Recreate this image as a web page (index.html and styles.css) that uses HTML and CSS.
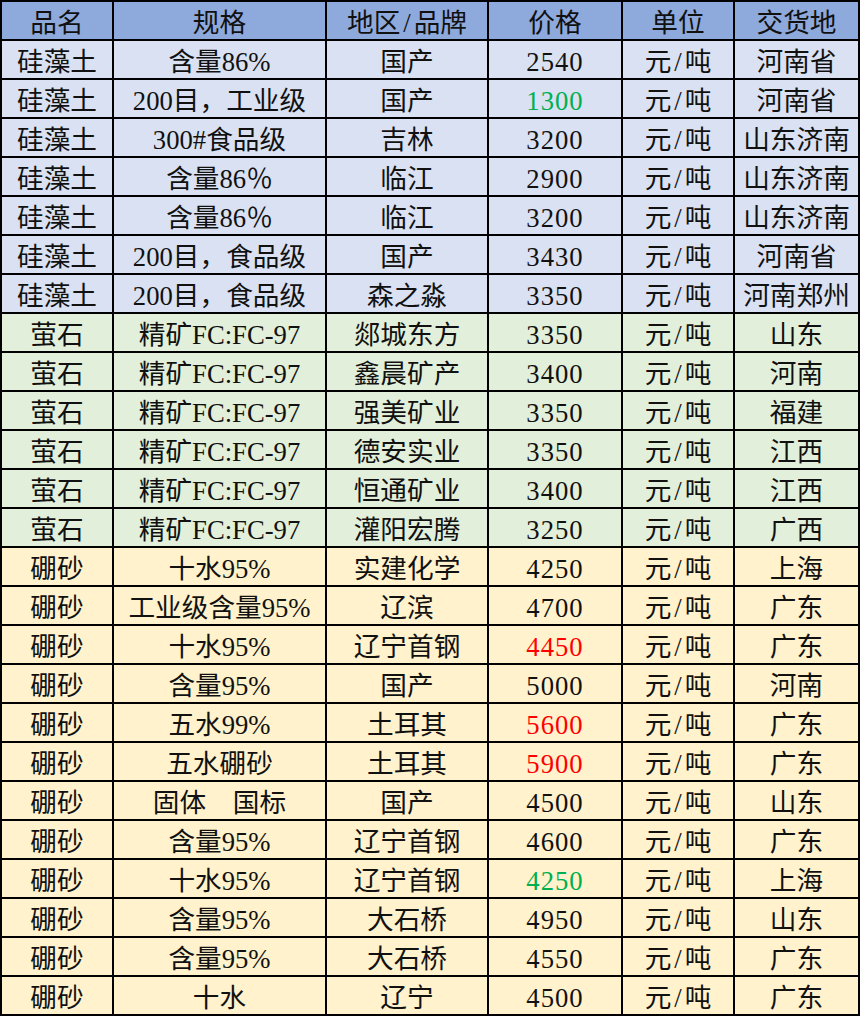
FILE: index.html
```html
<!DOCTYPE html>
<html lang="zh-CN">
<head>
<meta charset="utf-8">
<title>价格表</title>
<link rel="stylesheet" href="styles.css">
</head>
<body>
<table class="price-table">
  <colgroup>
    <col class="c-name">
    <col class="c-spec">
    <col class="c-brand">
    <col class="c-price">
    <col class="c-unit">
    <col class="c-place">
  </colgroup>
  <thead>
    <tr class="head"><th>品名</th><th>规格</th><th>地区<span class="sl">/</span>品牌</th><th>价格</th><th>单位</th><th>交货地</th></tr>
  </thead>
  <tbody>
    <tr class="blue"><td>硅藻土</td><td>含量86%</td><td>国产</td><td class="num">2540</td><td>元<span class="sl">/</span>吨</td><td>河南省</td></tr>
    <tr class="blue"><td>硅藻土</td><td>200目，工业级</td><td>国产</td><td class="num up">1300</td><td>元<span class="sl">/</span>吨</td><td>河南省</td></tr>
    <tr class="blue"><td>硅藻土</td><td>300#食品级</td><td>吉林</td><td class="num">3200</td><td>元<span class="sl">/</span>吨</td><td>山东济南</td></tr>
    <tr class="blue"><td>硅藻土</td><td>含量86％</td><td>临江</td><td class="num">2900</td><td>元<span class="sl">/</span>吨</td><td>山东济南</td></tr>
    <tr class="blue"><td>硅藻土</td><td>含量86％</td><td>临江</td><td class="num">3200</td><td>元<span class="sl">/</span>吨</td><td>山东济南</td></tr>
    <tr class="blue"><td>硅藻土</td><td>200目，食品级</td><td>国产</td><td class="num">3430</td><td>元<span class="sl">/</span>吨</td><td>河南省</td></tr>
    <tr class="blue"><td>硅藻土</td><td>200目，食品级</td><td>森之淼</td><td class="num">3350</td><td>元<span class="sl">/</span>吨</td><td>河南郑州</td></tr>
    <tr class="green"><td>萤石</td><td>精矿FC:FC-97</td><td>郯城东方</td><td class="num">3350</td><td>元<span class="sl">/</span>吨</td><td>山东</td></tr>
    <tr class="green"><td>萤石</td><td>精矿FC:FC-97</td><td>鑫晨矿产</td><td class="num">3400</td><td>元<span class="sl">/</span>吨</td><td>河南</td></tr>
    <tr class="green"><td>萤石</td><td>精矿FC:FC-97</td><td>强美矿业</td><td class="num">3350</td><td>元<span class="sl">/</span>吨</td><td>福建</td></tr>
    <tr class="green"><td>萤石</td><td>精矿FC:FC-97</td><td>德安实业</td><td class="num">3350</td><td>元<span class="sl">/</span>吨</td><td>江西</td></tr>
    <tr class="green"><td>萤石</td><td>精矿FC:FC-97</td><td>恒通矿业</td><td class="num">3400</td><td>元<span class="sl">/</span>吨</td><td>江西</td></tr>
    <tr class="green"><td>萤石</td><td>精矿FC:FC-97</td><td>灌阳宏腾</td><td class="num">3250</td><td>元<span class="sl">/</span>吨</td><td>广西</td></tr>
    <tr class="yellow"><td>硼砂</td><td>十水95%</td><td>实建化学</td><td class="num">4250</td><td>元<span class="sl">/</span>吨</td><td>上海</td></tr>
    <tr class="yellow"><td>硼砂</td><td>工业级含量95%</td><td>辽滨</td><td class="num">4700</td><td>元<span class="sl">/</span>吨</td><td>广东</td></tr>
    <tr class="yellow"><td>硼砂</td><td>十水95%</td><td>辽宁首钢</td><td class="num down">4450</td><td>元<span class="sl">/</span>吨</td><td>广东</td></tr>
    <tr class="yellow"><td>硼砂</td><td>含量95%</td><td>国产</td><td class="num">5000</td><td>元<span class="sl">/</span>吨</td><td>河南</td></tr>
    <tr class="yellow"><td>硼砂</td><td>五水99%</td><td>土耳其</td><td class="num down">5600</td><td>元<span class="sl">/</span>吨</td><td>广东</td></tr>
    <tr class="yellow"><td>硼砂</td><td>五水硼砂</td><td>土耳其</td><td class="num down">5900</td><td>元<span class="sl">/</span>吨</td><td>广东</td></tr>
    <tr class="yellow"><td>硼砂</td><td>固体　国标</td><td>国产</td><td class="num">4500</td><td>元<span class="sl">/</span>吨</td><td>山东</td></tr>
    <tr class="yellow"><td>硼砂</td><td>含量95%</td><td>辽宁首钢</td><td class="num">4600</td><td>元<span class="sl">/</span>吨</td><td>广东</td></tr>
    <tr class="yellow"><td>硼砂</td><td>十水95%</td><td>辽宁首钢</td><td class="num up">4250</td><td>元<span class="sl">/</span>吨</td><td>上海</td></tr>
    <tr class="yellow"><td>硼砂</td><td>含量95%</td><td>大石桥</td><td class="num">4950</td><td>元<span class="sl">/</span>吨</td><td>山东</td></tr>
    <tr class="yellow"><td>硼砂</td><td>含量95%</td><td>大石桥</td><td class="num">4550</td><td>元<span class="sl">/</span>吨</td><td>广东</td></tr>
    <tr class="yellow"><td>硼砂</td><td>十水</td><td>辽宁</td><td class="num">4500</td><td>元<span class="sl">/</span>吨</td><td>广东</td></tr>
  </tbody>
</table>
</body>
</html>
```

FILE: styles.css
```css
html, body {
  margin: 0;
  padding: 0;
  background: #ffffff;
}

.price-table {
  border-collapse: collapse;
  table-layout: fixed;
  width: 860px;
  font-family: "Liberation Serif", "Noto Sans CJK SC", serif;
  font-size: 26.67px;
  color: #111111;
}

.c-name { width: 112px; }
.c-spec { width: 213px; }
.c-brand { width: 162px; }
.c-price { width: 134px; }
.c-unit { width: 112px; }
.c-place { width: 125px; }

.price-table th,
.price-table td {
  border: 2px solid #000000;
  height: 39px;
  padding: 6px 0 0 0;
  box-sizing: border-box;
  text-align: center;
  vertical-align: middle;
  white-space: nowrap;
  overflow: hidden;
  line-height: 1;
  font-weight: 400;
}

.num { letter-spacing: 1px; }

.sl {
  display: inline-block;
  padding: 0 3px;
}

.head { background: #8ea9db; }
.blue { background: #d9e1f2; }
.green { background: #e2efda; }
.yellow { background: #fff2cc; }

.up { color: #00b050; }
.down { color: #ff0000; }
```
